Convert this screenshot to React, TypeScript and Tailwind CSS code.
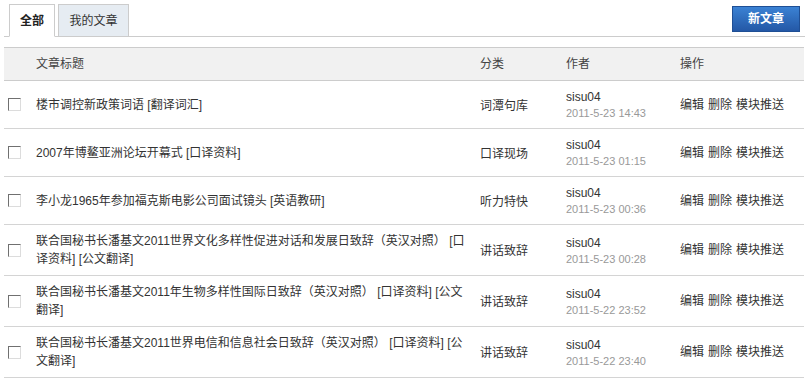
import { useState } from 'react';

type Article = {
  lines: string[];
  category: string;
  author: string;
  time: string;
};

// titles are stored pre-split to keep the wrap identical to the original listing
const articles: Article[] = [
  { lines: ['楼市调控新政策词语 [翻译词汇]'], category: '词潭句库', author: 'sisu04', time: '2011-5-23 14:43' },
  { lines: ['2007年博鳌亚洲论坛开幕式 [口译资料]'], category: '口译现场', author: 'sisu04', time: '2011-5-23 01:15' },
  { lines: ['李小龙1965年参加福克斯电影公司面试镜头 [英语教研]'], category: '听力特快', author: 'sisu04', time: '2011-5-23 00:36' },
  {
    lines: ['联合国秘书长潘基文2011世界文化多样性促进对话和发展日致辞（英汉对照） [口', '译资料] [公文翻译]'],
    category: '讲话致辞',
    author: 'sisu04',
    time: '2011-5-23 00:28',
  },
  {
    lines: ['联合国秘书长潘基文2011年生物多样性国际日致辞（英汉对照） [口译资料] [公文', '翻译]'],
    category: '讲话致辞',
    author: 'sisu04',
    time: '2011-5-22 23:52',
  },
  {
    lines: ['联合国秘书长潘基文2011世界电信和信息社会日致辞（英汉对照） [口译资料] [公', '文翻译]'],
    category: '讲话致辞',
    author: 'sisu04',
    time: '2011-5-22 23:40',
  },
];

function CheckBox() {
  return (
    <span className="block w-[13px] h-[13px] bg-white border border-t-[#707070] border-l-[#707070] border-b-[#dcdcdc] border-r-[#dcdcdc]" />
  );
}

export default function App() {
  const [tab, setTab] = useState<'all' | 'mine'>('all');

  return (
    <div className="w-[810px] min-h-[378px] bg-white text-[12px] text-[#333] font-['Liberation_Sans','Noto_Sans_CJK_SC',sans-serif]">
      {/* Tabs + new button */}
      <div className="ml-[4px] mr-[5px] h-[37px] flex justify-between border-b border-[#cccccc]">
        <div className="flex items-end">
          <button
            onClick={() => setTab('all')}
            className={
              tab === 'all'
                ? 'ml-[5px] -mb-px w-[46px] h-[33px] border border-[#cccccc] border-b-white bg-white font-bold text-[#222]'
                : 'ml-[5px] -mb-px w-[46px] h-[33px] border border-[#cccccc] bg-[#e6ecf2] text-[#333]'
            }
          >
            全部
          </button>
          <button
            onClick={() => setTab('mine')}
            className={
              tab === 'mine'
                ? 'ml-[3px] -mb-px w-[71px] h-[33px] border border-[#cccccc] border-b-white bg-white font-bold text-[#222]'
                : 'ml-[3px] -mb-px w-[71px] h-[33px] border border-[#cccccc] bg-[#e6ecf2] text-[#333]'
            }
          >
            我的文章
          </button>
        </div>
        <button className="mt-[6px] mr-[5px] w-[68px] h-[26px] border border-[#1f4f95] bg-gradient-to-b from-[#3b82d4] to-[#2458a6] text-white font-bold">
          新文章
        </button>
      </div>

      {/* Table */}
      <div className="mt-[10px] ml-[4px] w-[800px]">
        <div className="grid grid-cols-[32px_444px_86px_114px_1fr] items-center h-[34px] bg-[#f1f1f1] border-t border-b border-[#cccccc] text-[#444]">
          <div />
          <div>文章标题</div>
          <div>分类</div>
          <div>作者</div>
          <div>操作</div>
        </div>

        {articles.map((a, i) => (
          <div
            key={i}
            className="grid grid-cols-[32px_444px_86px_114px_1fr] items-center py-[7px] border-b border-[#d4d4d4]"
          >
            <div className="pl-[4px]">
              <CheckBox />
            </div>
            <div className="pr-[6px] leading-[18px] whitespace-nowrap">
              {a.lines.map((l, j) => (
                <div key={j}>{l}</div>
              ))}
            </div>
            <div className="pt-[2px]">{a.category}</div>
            <div className="leading-[16px] pt-[1px]">
              <div>{a.author}</div>
              <div className="text-[11px] text-[#999]">{a.time}</div>
            </div>
            <div className="flex gap-[4px]">
              <a className="cursor-pointer">编辑</a>
              <a className="cursor-pointer">删除</a>
              <a className="cursor-pointer">模块推送</a>
            </div>
          </div>
        ))}
      </div>
    </div>
  );
}
